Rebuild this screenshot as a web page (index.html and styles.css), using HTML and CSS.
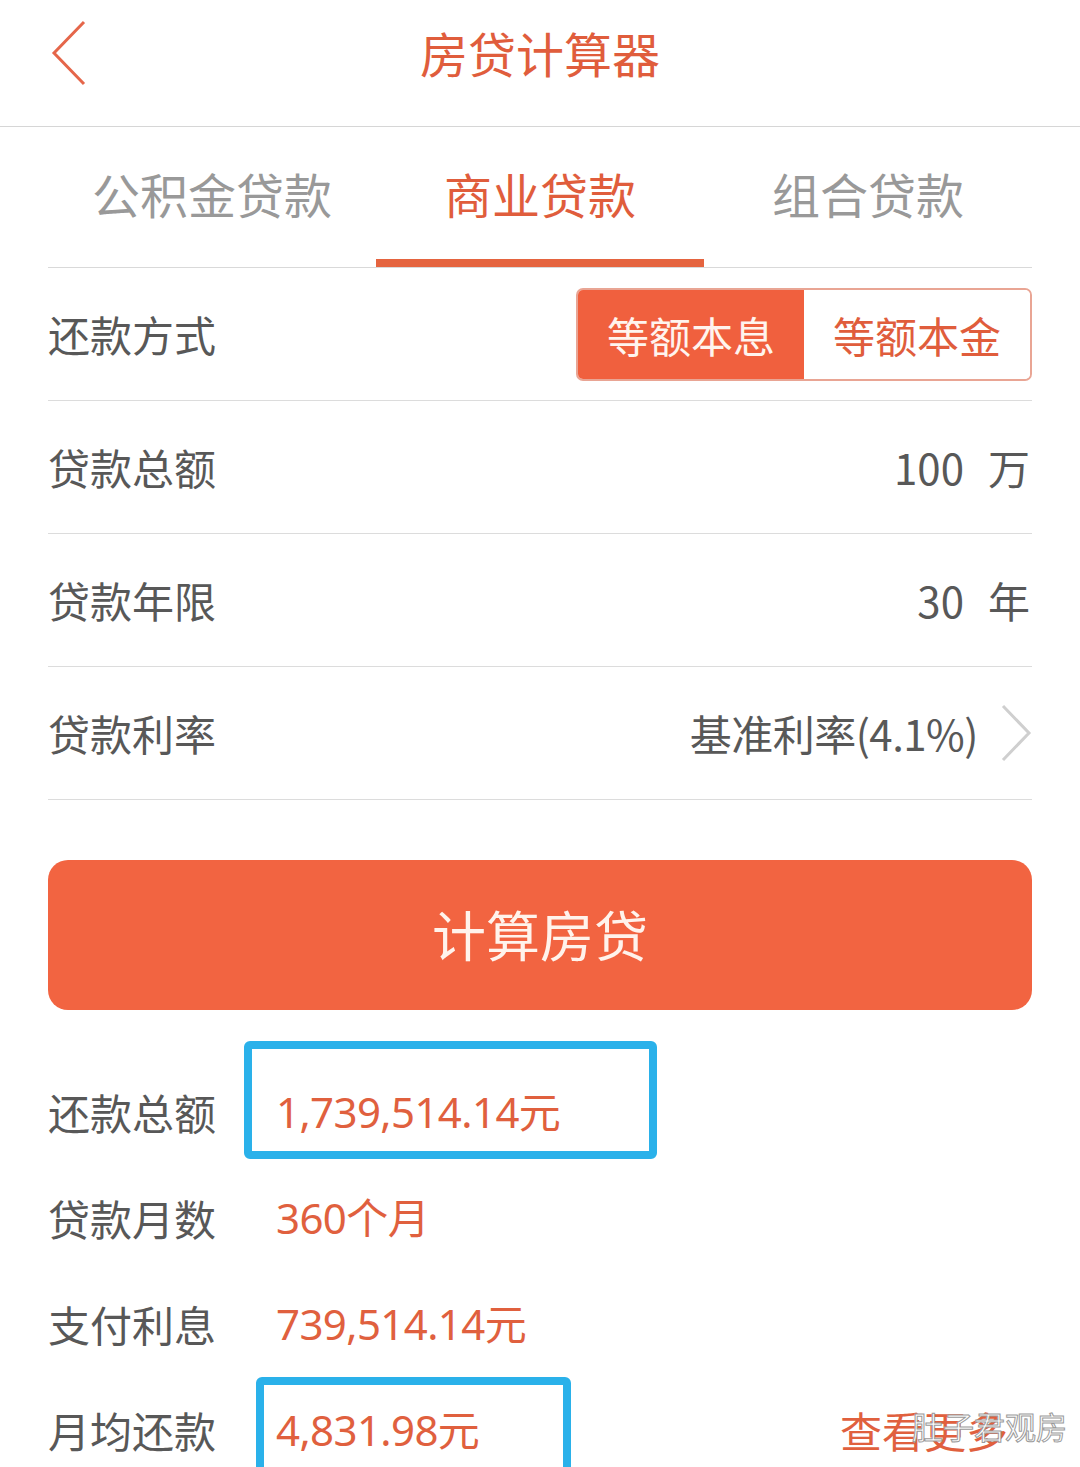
FILE: index.html
```html
<!DOCTYPE html>
<html lang="zh-CN">

<head>
  <meta charset="UTF-8">
  <meta name="viewport" content="width=device-width, initial-scale=1.0">
  <title>房贷计算器</title>
  <link rel="stylesheet" href="styles.css">
</head>

<body>
  <div class="page">
    <div class="top-bar">
      <svg class="back" width="40" height="66" viewBox="0 0 40 66">
        <polyline points="34,2 4,33 34,64" fill="none" stroke="#e5664a" stroke-width="3" />
      </svg>
      <h1>房贷计算器</h1>
    </div>

    <div class="content">
      <div class="tabs">
        <div class="tab">公积金贷款</div>
        <div class="tab active">商业贷款</div>
        <div class="tab">组合贷款</div>
      </div>

      <div class="row">
        <span class="label">还款方式</span>
        <div class="seg">
          <span class="seg-item on">等额本息</span>
          <span class="seg-item">等额本金</span>
        </div>
      </div>
      <div class="row">
        <span class="label">贷款总额</span>
        <span class="val">100<span class="unit">万</span></span>
      </div>
      <div class="row">
        <span class="label">贷款年限</span>
        <span class="val">30<span class="unit">年</span></span>
      </div>
      <div class="row">
        <span class="label">贷款利率</span>
        <span class="val rate">基准利率(4.1%)
          <svg class="arrow" width="32" height="58" viewBox="0 0 32 58">
            <polyline points="3,2 29,29 3,56" fill="none" stroke="#cfcfcf" stroke-width="3" />
          </svg>
        </span>
      </div>

      <button class="calc">计算房贷</button>

      <div class="results">
        <div class="res">
          <span class="label">还款总额</span>
          <span class="num mark-a">1,739,514.14元</span>
        </div>
        <div class="res">
          <span class="label">贷款月数</span>
          <span class="num">360个月</span>
        </div>
        <div class="res">
          <span class="label">支付利息</span>
          <span class="num">739,514.14元</span>
        </div>
        <div class="res">
          <span class="label">月均还款</span>
          <span class="num mark-b">4,831.98元</span>
          <span class="more">查看更多</span>
        </div>
      </div>
    </div>

    <div class="watermark">肚子君观房</div>
  </div>
</body>

</html>
```

FILE: styles.css
```css
body {
  margin: 0;
  background: #fff;
  font-family: "Noto Sans CJK SC", "Noto Sans", sans-serif;
  color: #585858;
}

.page {
  position: relative;
  width: 1080px;
  height: 1467px;
  overflow: hidden;
}

.top-bar {
  position: relative;
  height: 126px;
  border-bottom: 1px solid #d6d6d6;
  display: flex;
  align-items: center;
  justify-content: center;
}

.top-bar .back {
  position: absolute;
  left: 50px;
  top: 20px;
}

.top-bar h1 {
  margin: 0 0 22px;
  font-size: 48px;
  font-weight: 400;
  color: #e05d3c;
  line-height: 1;
}

.content {
  padding: 0 48px;
}

.tabs {
  display: grid;
  grid-template-columns: repeat(3, 1fr);
  border-bottom: 1px solid #d9d9d9;
}

.tab {
  height: 132px;
  padding-bottom: 8px;
  box-sizing: content-box;
  display: flex;
  align-items: center;
  justify-content: center;
  font-size: 48px;
  color: #999;
  line-height: 1;
}

.tab.active {
  color: #e05d3c;
  border-bottom: 8px solid #e5643f;
  padding-bottom: 0;
}

.row {
  height: 132px;
  border-bottom: 1px solid #dcdcdc;
  display: flex;
  align-items: center;
  justify-content: space-between;
}

.label {
  font-size: 42px;
  color: #585858;
  line-height: 1;
}

.val {
  font-size: 42px;
  color: #585858;
  line-height: 1;
  display: flex;
  align-items: center;
}

.unit {
  margin-left: 24px;
  margin-right: 2px;
}

.rate {
  letter-spacing: -0.5px;
}

.rate .arrow {
  margin-left: 22px;
}

.seg {
  display: flex;
  height: 89px;
  border: 2px solid #e9a594;
  border-radius: 7px;
  overflow: hidden;
}

.seg-item {
  width: 226px;
  display: flex;
  align-items: center;
  justify-content: center;
  font-size: 42px;
  color: #e05d3c;
  background: #fff;
}

.seg-item.on {
  background: #f0603e;
  color: #fff4ee;
}

.calc {
  display: block;
  width: 100%;
  height: 150px;
  margin-top: 60px;
  border: none;
  border-radius: 20px;
  background: #f26441;
  color: #fff3ec;
  font-family: inherit;
  font-size: 54px;
  padding: 0 0 4px;
}

.results {
  margin-top: 49px;
}

.res {
  height: 106px;
  display: flex;
  align-items: center;
}

.num {
  position: relative;
  margin-left: 60px;
  font-family: "Noto Sans", "Noto Sans CJK SC", sans-serif;
  font-size: 42px;
  letter-spacing: -0.6px;
  color: #e0603e;
  line-height: 1;
}

.mark-a::before,
.mark-b::before {
  content: "";
  position: absolute;
  border: 8px solid #2ab1ea;
  border-radius: 6px;
}

.mark-a::before {
  left: -32px;
  top: -50px;
  width: 397px;
  height: 102px;
}

.mark-b::before {
  left: -20px;
  top: -32px;
  width: 299px;
  height: 100px;
}

.more {
  margin-left: auto;
  margin-right: 24px;
  font-size: 42px;
  color: #e0603e;
  line-height: 1;
}

.watermark {
  position: absolute;
  left: 912px;
  top: 1410px;
  font-size: 31px;
  color: #fff;
  line-height: 1;
  -webkit-text-stroke: 1px #9a9a9a;
}
```
